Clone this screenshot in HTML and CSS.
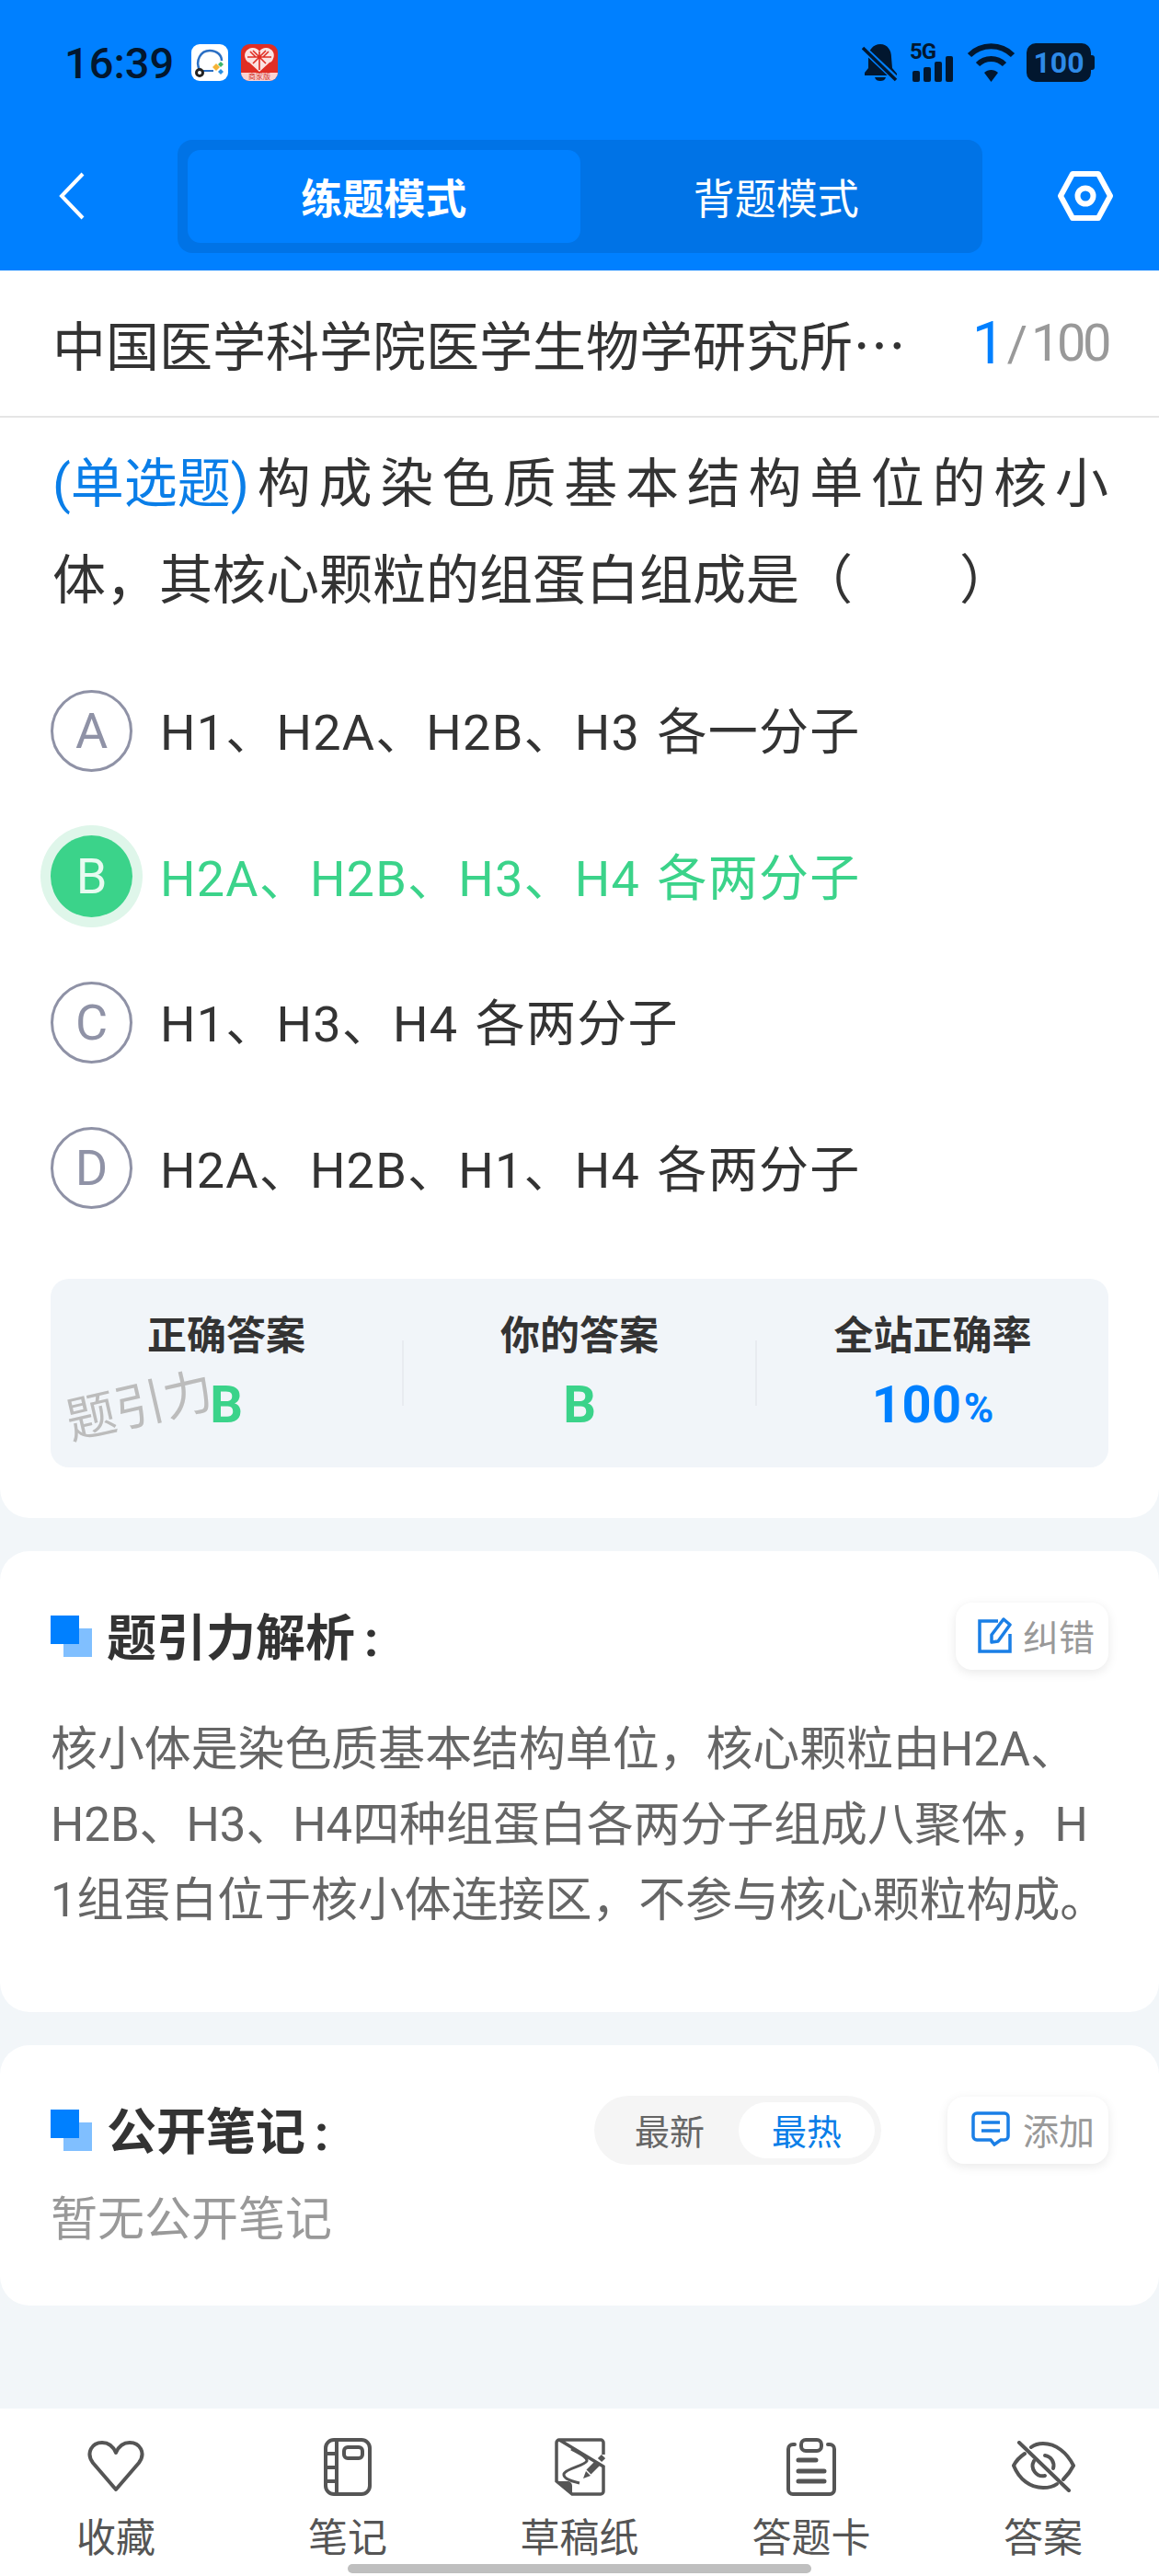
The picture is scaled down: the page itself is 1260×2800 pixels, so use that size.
FILE: index.html
```html
<!DOCTYPE html>
<html lang="zh-CN">
<head>
  <meta charset="UTF-8" />
  <title>练题模式</title>
  <link rel="stylesheet" href="styles.css">
</head>
<body>
<div class="page">

  <!-- 顶部 -->
  <header class="top">
    <div class="status">
      <span class="time">16:39</span>
      <svg class="app-icon" viewBox="0 0 40 40">
        <rect width="40" height="40" rx="9" fill="#fff"/>
        <path d="M9 28 C4 18 10 7 20 7 C28 7 33 12 33 18" fill="none" stroke="#2b6fc4" stroke-width="2.5"/>
        <path d="M12 29 H24" stroke="#2b6fc4" stroke-width="2"/>
        <circle cx="9" cy="31" r="3.5" fill="#fff" stroke="#222" stroke-width="3"/>
        <path d="M27 21 L31 25 L27 29 L23 25 Z" fill="#f5b335"/>
        <path d="M32 19 L35 22 L32 25 L29 22 Z" fill="#3fb56b"/>
        <path d="M32 27 L35 30 L32 33 L29 30 Z" fill="#2b8fe0"/>
      </svg>
      <svg class="app-icon red-icon" viewBox="0 0 40 40">
        <rect width="40" height="40" rx="9" fill="#e02e24"/>
        <path d="M0 31 H40 V31 A9 9 0 0 1 31 40 H9 A9 9 0 0 1 0 31 Z" fill="#fbd3d1"/>
        <path d="M20 31 L6 18 C1 10 7 4 13 4 C16 4 18 5 20 8 C22 5 24 4 27 4 C33 4 39 10 34 18 Z" fill="#fbe3e1"/>
        <path d="M13 7 L27 21 M27 7 L13 21 M20 8 V28 M7 14 H33 M8 20 L20 31 L32 20 M10 8 L16 14 M30 8 L24 14" stroke="#e02e24" stroke-width="1.6" fill="none"/>
        <text x="20" y="38" text-anchor="middle" class="red-label">商家版</text>
      </svg>
      <div class="status-right">
        <svg class="st-bell" viewBox="0 0 40 42">
          <path d="M20 1 C28 1 32 8 32 15 L33 27 L38 33 V35 H3 V32 L7 27 V15 C7 8 12 1 20 1 Z" fill="#02172f"/>
          <path d="M14 37 H26 C25 40 23 41 20 41 C17 41 15 40 14 37 Z" fill="#02172f"/>
          <path d="M3 7 L38 40" stroke="#0080ff" stroke-width="7"/>
          <path d="M1 5 L37 40" stroke="#02172f" stroke-width="3.5"/>
        </svg>
        <div class="st-signal">
          <span class="st-5g">5G</span>
          <svg class="st-bars" viewBox="0 0 50 42">
            <rect x="3" y="30" width="8" height="12" rx="2"/>
            <rect x="15" y="26" width="8" height="16" rx="2"/>
            <rect x="27" y="20" width="8" height="22" rx="2"/>
            <rect x="39" y="14" width="8" height="28" rx="2"/>
          </svg>
        </div>
        <svg class="st-wifi" viewBox="0 0 53 42">
          <path d="M3 13 C16 0 37 0 50 13" fill="none" stroke="#02172f" stroke-width="6"/>
          <path d="M12 23 C20 15 33 15 41 23" fill="none" stroke="#02172f" stroke-width="6"/>
          <path d="M19 32 C23 28 30 28 34 32 L26.5 42 Z" fill="#02172f"/>
        </svg>
        <span class="battery">100</span>
      </div>
    </div>

    <nav class="nav">
      <svg class="nav-back" viewBox="0 0 28 52">
        <path d="M26 2 L3 26 L26 50" fill="none" stroke="#fff" stroke-width="4"/>
      </svg>
      <div class="mode-track">
        <div class="mode mode-active">练题模式</div>
        <div class="mode">背题模式</div>
      </div>
      <svg class="nav-gear" viewBox="0 0 60 54">
        <path d="M16 3 H44 L57 27 L44 51 H16 L3 27 Z" fill="none" stroke="#fff" stroke-width="6" stroke-linejoin="round"/>
        <circle cx="30" cy="27" r="8.5" fill="none" stroke="#fff" stroke-width="6"/>
      </svg>
    </nav>
  </header>

  <!-- 题目 -->
  <section class="card question-card">
    <div class="paper-row">
      <div class="paper-title">中国医学科学院医学生物学研究所…</div>
      <div class="paper-count"><span class="count-now">1</span><span class="count-sep">/</span><span class="count-all">100</span></div>
    </div>

    <div class="question">
      <span class="q-line"><span class="q-type">(单选题)</span>构成染色质基本结构单位的核小</span>
      <span class="q-line-last">体，其核心颗粒的组蛋白组成是（　　）</span>
    </div>

    <div class="options">
      <div class="option"><span class="opt-mark">A</span><span class="opt-text">H1、H2A、H2B、H3 各一分子</span></div>
      <div class="option option-right"><span class="opt-mark">B</span><span class="opt-text">H2A、H2B、H3、H4 各两分子</span></div>
      <div class="option"><span class="opt-mark">C</span><span class="opt-text">H1、H3、H4 各两分子</span></div>
      <div class="option"><span class="opt-mark">D</span><span class="opt-text">H2A、H2B、H1、H4 各两分子</span></div>
    </div>

    <div class="stats">
      <div class="stat">
        <div class="stat-label">正确答案</div>
        <div class="stat-value green">B</div>
      </div>
      <div class="stat-divider"></div>
      <div class="stat">
        <div class="stat-label">你的答案</div>
        <div class="stat-value green">B</div>
      </div>
      <div class="stat-divider"></div>
      <div class="stat">
        <div class="stat-label">全站正确率</div>
        <div class="stat-value blue"><span class="rate">100</span><span class="percent">%</span></div>
      </div>
      <div class="watermark">题引力</div>
    </div>
  </section>

  <!-- 解析 -->
  <section class="card block analysis">
    <div class="block-head">
      <svg class="mark" viewBox="0 0 45 45"><rect x="14" y="14" width="31" height="31" fill="#80bfff"/><rect width="31" height="31" fill="#0080ff"/></svg>
      <h2 class="block-title">题引力解析<span class="colon">:</span></h2>
      <div class="small-btn fix-btn">
        <svg class="btn-icon" viewBox="0 0 40 40">
          <path d="M23 5 H3 V38 H36 V19" fill="none" stroke="#1a7fe6" stroke-width="3.5"/>
          <path d="M16 28 V20 L29 3 L36 9 L23 27 Z" fill="none" stroke="#1a7fe6" stroke-width="3.5" stroke-linejoin="round"/>
        </svg>
        <span>纠错</span>
      </div>
    </div>
    <p class="analysis-text">核小体是染色质基本结构单位，核心颗粒由H2A、H2B、H3、H4四种组蛋白各两分子组成八聚体，H1组蛋白位于核小体连接区，不参与核心颗粒构成。</p>
  </section>

  <!-- 笔记 -->
  <section class="card block notes">
    <div class="block-head">
      <svg class="mark" viewBox="0 0 45 45"><rect x="14" y="14" width="31" height="31" fill="#80bfff"/><rect width="31" height="31" fill="#0080ff"/></svg>
      <h2 class="block-title">公开笔记<span class="colon">:</span></h2>
      <div class="sort-toggle">
        <span class="sort-item">最新</span>
        <span class="sort-item sort-active">最热</span>
      </div>
      <div class="small-btn add-btn">
        <svg class="btn-icon add-icon" viewBox="0 0 42 38">
          <path d="M6 2 H36 A4 4 0 0 1 40 6 V27 A4 4 0 0 1 36 31 H32 L25 36 L21 31 H6 A4 4 0 0 1 2 27 V6 A4 4 0 0 1 6 2 Z" fill="none" stroke="#1a7fe6" stroke-width="3.5"/>
          <path d="M11 12 H31 M11 21 H31" stroke="#1a7fe6" stroke-width="3.5"/>
        </svg>
        <span>添加</span>
      </div>
    </div>
    <p class="notes-empty">暂无公开笔记</p>
  </section>

  <!-- 底部 -->
  <footer class="tabbar">
    <div class="tab">
      <div class="tab-icon">
        <svg width="66" height="58" viewBox="0 0 66 58">
          <path d="M33 54 L8 25 C0 14 7 3 18 3 C25 3 30 7 33 14 C36 7 41 3 48 3 C59 3 66 14 58 25 Z" fill="none" stroke="#555" stroke-width="4" stroke-linejoin="round"/>
        </svg>
      </div>
      <span>收藏</span>
    </div>
    <div class="tab">
      <div class="tab-icon">
        <svg width="52" height="63" viewBox="0 0 52 63" fill="none" stroke="#555" stroke-width="4">
          <rect x="2" y="2" width="48" height="59" rx="9"/>
          <path d="M14 2 V61 M2 17 H14 M2 32 H14 M2 47 H14"/>
          <rect x="22" y="10" width="20" height="12" rx="4"/>
        </svg>
      </div>
      <span>笔记</span>
    </div>
    <div class="tab">
      <div class="tab-icon">
        <svg width="55" height="63" viewBox="0 0 55 63" fill="none" stroke="#555">
          <path d="M5 2 H50 A3 3 0 0 1 53 5 V18 M53 31 V58 A3 3 0 0 1 50 61 H19 L2 47 V5 A3 3 0 0 1 5 2 Z" stroke-width="3.5"/>
          <path d="M2 47 H14 A5 5 0 0 1 19 52 V61 Z" fill="#555" stroke="none"/>
          <path d="M18 12 C27 17 36 21 35 25 C33 30 12 33 10 39 C9 44 18 47 27 49" stroke-width="3"/>
          <path d="M37 37 L47 27" stroke-width="7"/>
          <path d="M49 24 L53 20" stroke-width="6"/>
          <path d="M31 44 L34 36 L39 41 Z" fill="#555" stroke="none"/>
        </svg>
      </div>
      <span>草稿纸</span>
    </div>
    <div class="tab">
      <div class="tab-icon">
        <svg width="54" height="63" viewBox="0 0 54 63" fill="none" stroke="#555" stroke-width="4">
          <path d="M9 7 H7 A5 5 0 0 0 2 12 V56 A5 5 0 0 0 7 61 H47 A5 5 0 0 0 52 56 V12 A5 5 0 0 0 47 7 H45" stroke-linecap="round"/>
          <rect x="16" y="2" width="22" height="12" rx="5"/>
          <path d="M13 24 H32 M13 36 H41 M13 47 H41" stroke-width="5" stroke-linecap="round"/>
        </svg>
      </div>
      <span>答题卡</span>
    </div>
    <div class="tab">
      <div class="tab-icon">
        <svg width="69" height="56" viewBox="0 0 69 56" fill="none" stroke="#555" stroke-width="4" stroke-linecap="round">
          <path d="M14 14 C8 18 4 23 2 27 C8 42 20 51 34 51 C40 51 45 50 49 47"/>
          <path d="M21 7 C25 4 30 3 34 3 C48 3 60 13 67 27 C64 33 60 38 56 42"/>
          <path d="M24 22 A11 11 0 0 0 36 38"/>
          <path d="M36 16 A11 11 0 0 1 45 30"/>
          <path d="M8 2 L62 54"/>
        </svg>
      </div>
      <span>答案</span>
    </div>
    <div class="home-bar"></div>
  </footer>

</div>
</body>
</html>
```

FILE: styles.css
```css
* {
  box-sizing: border-box;
}
body {
  margin: 0;
  font-family: Roboto, "Noto Sans CJK SC", sans-serif;
  color: #333;
  background: #f2f6f9;
}
.page {
  width: 1260px;
  height: 2800px;
  display: flex;
  flex-direction: column;
  overflow: hidden;
}

/* top */
.top {
  height: 294px;
  background: #0080ff;
  flex-shrink: 0;
}
.status {
  height: 136px;
  padding: 0 70px;
  display: flex;
  align-items: center;
  color: #02172f;
}
.time {
  font-size: 47px;
  font-weight: 500;
  width: 138px;
}
.app-icon {
  width: 40px;
  height: 40px;
}
.red-icon {
  margin-left: 14px;
}
.red-label {
  font-size: 8px;
  fill: #d0342c;
  font-family: "Noto Sans CJK SC", sans-serif;
}
.status-right {
  margin-left: auto;
  display: flex;
  align-items: center;
  gap: 12px;
}
.st-bell {
  width: 40px;
  height: 42px;
}
.st-signal {
  position: relative;
  width: 50px;
  height: 42px;
}
.st-5g {
  position: absolute;
  left: 0;
  top: 0;
  font-size: 24px;
  font-weight: 700;
  line-height: 18px;
  letter-spacing: -1px;
}
.st-bars {
  display: block;
  width: 50px;
  height: 42px;
  fill: #02172f;
}
.st-wifi {
  width: 53px;
  height: 42px;
}
.battery {
  width: 70px;
  height: 42px;
  margin-right: 4px;
  border-radius: 10px;
  background: #02172f;
  color: #2d8ae8;
  font-size: 32px;
  font-weight: 700;
  line-height: 42px;
  text-align: center;
  position: relative;
}
.battery::after {
  content: "";
  position: absolute;
  left: 70px;
  top: 13px;
  width: 4px;
  height: 16px;
  border-radius: 0 3px 3px 0;
  background: #02172f;
}
.nav {
  padding: 16px 0 0 64px;
  display: flex;
  align-items: flex-start;
}
.nav-back {
  width: 28px;
  height: 52px;
  margin: 35px 101px 0 0;
}
.mode-track {
  width: 875px;
  height: 123px;
  padding: 11px;
  display: flex;
  background: #0073e6;
  border-radius: 16px;
}
.mode {
  flex: 1;
  display: flex;
  align-items: center;
  justify-content: center;
  color: #fff;
  font-size: 45px;
  border-radius: 14px;
}
.mode-active {
  background: #0080ff;
  font-weight: 700;
}
.nav-gear {
  width: 60px;
  height: 54px;
  margin: 34px 0 0 82px;
}

/* cards */
.card {
  background: #fff;
  border-radius: 32px;
  flex-shrink: 0;
}
.question-card {
  height: 1356px;
  border-radius: 0 0 32px 32px;
}
.paper-row {
  height: 160px;
  padding: 0 55px 0 57px;
  display: flex;
  align-items: center;
  justify-content: space-between;
  border-bottom: 2px solid #e5e5e5;
}
.paper-title {
  font-family: "Noto Sans CJK SC", sans-serif;
  font-size: 58px;
  white-space: nowrap;
}
.paper-count {
  display: flex;
  align-items: center;
  color: #999;
}
.count-now {
  font-size: 64px;
  color: #0080ff;
}
.count-sep {
  font-size: 54px;
  margin: 0 4px 0 2px;
}
.count-all {
  font-size: 56px;
  letter-spacing: -3.5px;
}
.question {
  padding: 20px 55px 0 57px;
  font-size: 58px;
  line-height: 105px;
}
.q-line {
  display: block;
  text-align: justify;
  text-align-last: justify;
}
.q-type {
  display: inline-block;
  color: #0a7ee8;
}
.q-line-last {
  display: block;
}
.options {
  margin-top: 31px;
}
.option {
  height: 158.5px;
  padding-left: 55px;
  display: flex;
  align-items: center;
  gap: 30px;
  font-size: 54px;
}
.opt-text {
  padding-bottom: 5px;
  letter-spacing: 1.2px;
  word-spacing: 4px;
}
.opt-mark {
  width: 89px;
  height: 89px;
  flex-shrink: 0;
  display: flex;
  align-items: center;
  justify-content: center;
  border: 3px solid #8f92a6;
  border-radius: 50%;
  color: #8f92a6;
}
.option-right {
  color: #3bd38a;
}
.option-right .opt-mark {
  border: 0;
  background: #3bd38a;
  color: #e8fbf1;
  box-shadow: 0 0 0 11px #dff6ea;
}
.stats {
  position: relative;
  margin: 41px 55px 0;
  height: 205px;
  padding: 32px 0 0;
  display: flex;
  align-items: flex-start;
  background: #f1f5f9;
  border-radius: 20px;
}
.stat {
  flex: 1;
  text-align: center;
}
.stat-label {
  font-size: 43px;
  font-weight: 700;
  line-height: 60px;
}
.stat-value {
  margin-top: 15px;
  font-size: 56px;
  font-weight: 700;
  line-height: 60px;
}
.green {
  color: #3bd38a;
}
.blue {
  color: #0080ff;
}
.rate {
  letter-spacing: 0.5px;
}
.percent {
  font-size: 44px;
  margin-left: 2px;
}
.stat-divider {
  width: 2px;
  height: 71px;
  margin-top: 35px;
  background: #e8ebf0;
}
.watermark {
  position: absolute;
  left: 16px;
  top: 104px;
  font-size: 54px;
  line-height: 70px;
  color: #bcbcbc;
  transform: rotate(-13deg);
}

/* blocks */
.block {
  margin-top: 36px;
  padding: 56px 55px 0;
}
.analysis {
  height: 501px;
}
.notes {
  height: 283px;
}
.block-head {
  height: 73px;
  display: flex;
  align-items: center;
}
.mark {
  width: 45px;
  height: 45px;
  flex-shrink: 0;
}
.block-title {
  margin: 0 0 0 16px;
  padding-bottom: 5px;
  font-size: 54px;
  font-weight: 700;
  white-space: nowrap;
}
.colon {
  margin-left: 10px;
}
.small-btn {
  height: 73px;
  margin-left: auto;
  padding-bottom: 3px;
  display: flex;
  align-items: center;
  background: #fff;
  border-radius: 18px;
  box-shadow: 0 3px 12px rgba(0, 0, 0, 0.09);
  font-size: 39px;
  color: #999;
  flex-shrink: 0;
}
.fix-btn {
  width: 166px;
  padding-left: 23px;
  gap: 10px;
}
.add-btn {
  width: 175px;
  margin-left: 72px;
  padding-left: 26px;
  gap: 14px;
}
.btn-icon {
  width: 40px;
  height: 40px;
  flex-shrink: 0;
}
.add-icon {
  width: 42px;
  height: 38px;
}
.analysis-text {
  margin: 46px 0 0;
  font-size: 50.9px;
  line-height: 82px;
  color: #666;
  word-break: break-all;
}
.sort-toggle {
  height: 75px;
  margin-left: auto;
  padding: 7px;
  display: flex;
  background: #f5f5f5;
  border-radius: 38px;
}
.sort-item {
  width: 150px;
  padding-bottom: 3px;
  display: flex;
  align-items: center;
  justify-content: center;
  font-size: 38px;
  color: #666;
  border-radius: 31px;
}
.sort-active {
  width: 148px;
  background: #fff;
  color: #0a7ee8;
}
.notes-empty {
  margin: 26px 0 0;
  font-size: 51px;
  line-height: 70px;
  color: #999;
}

/* tabbar */
.tabbar {
  position: relative;
  margin-top: auto;
  height: 182px;
  display: flex;
  background: #fff;
}
.tab {
  flex: 1;
  padding-top: 30px;
  display: flex;
  flex-direction: column;
  align-items: center;
  font-size: 43px;
  line-height: 52px;
  color: #555;
}
.tab-icon {
  height: 66px;
  margin-bottom: 19px;
  display: flex;
  align-items: center;
  justify-content: center;
}
.home-bar {
  position: absolute;
  left: 378px;
  top: 169px;
  width: 504px;
  height: 10px;
  border-radius: 5px;
  background: #bfbfbf;
}
```
